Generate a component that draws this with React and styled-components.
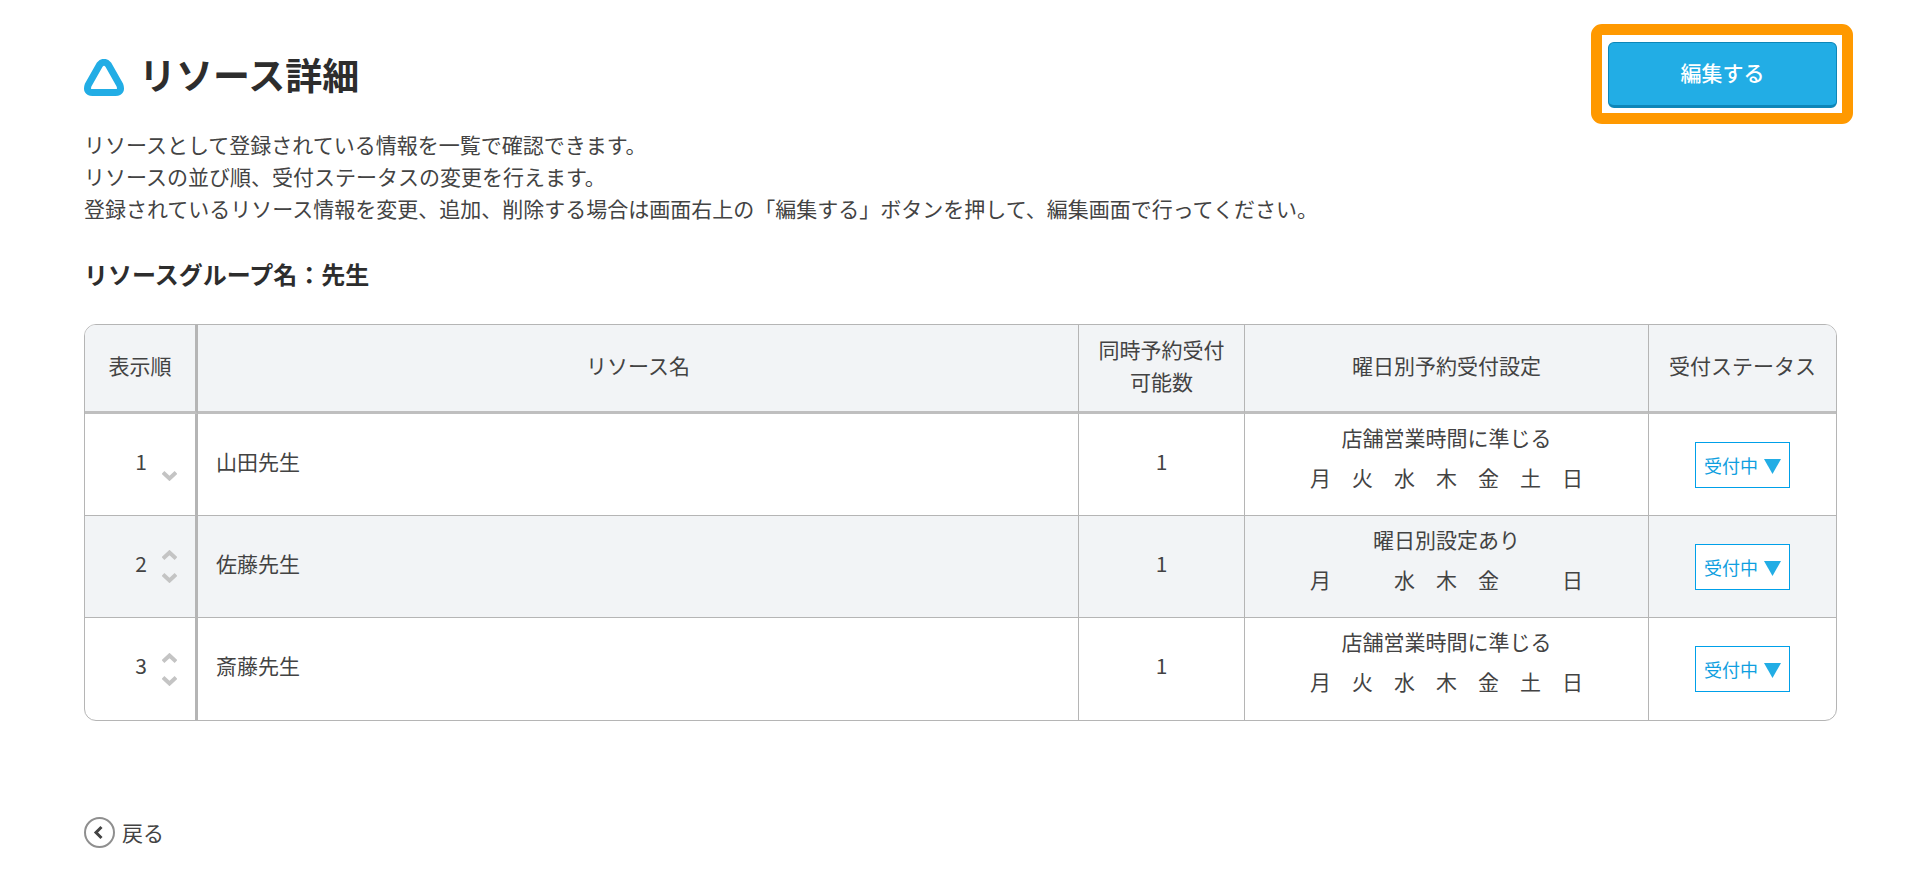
import React, { useState } from "react";
import styled, { createGlobalStyle } from "styled-components";


const RESOURCES = [
  { id: 1, name: "山田先生", capacity: 1, schedule: "店舗営業時間に準じる", days: "月火水木金土日" },
  { id: 2, name: "佐藤先生", capacity: 1, schedule: "曜日別設定あり", days: "月水木金日" },
  { id: 3, name: "斎藤先生", capacity: 1, schedule: "店舗営業時間に準じる", days: "月火水木金土日" },
]

const WEEK = Array.from( "月火水木金土日" )


export default function App() {
  const [ resources, setResources ] = useState( RESOURCES )

  const move = ( index, step ) => {
    const next = [ ...resources ]
    const [ item ] = next.splice( index, 1 )
    next.splice( index + step, 0, item )
    setResources( next )
  }

  return (
    <Page>
      <GlobalStyle />
      <Header>
        <Title>
          <TitleIcon viewBox="0 0 40 37" aria-hidden="true">
            <path d="M15.8 5.6 Q20 1 24.2 5.6 L35.8 26 Q38.4 33.4 31.5 33.5 H8.5 Q1.6 33.4 4.2 26 Z" />
          </TitleIcon>
          リソース詳細
        </Title>
        <Highlight>
          <EditButton type="button">編集する</EditButton>
        </Highlight>
      </Header>

      <Lead>
        リソースとして登録されている情報を一覧で確認できます。<br />
        リソースの並び順、受付ステータスの変更を行えます。<br />
        登録されているリソース情報を変更、追加、削除する場合は画面右上の「編集する」ボタンを押して、編集画面で行ってください。
      </Lead>

      <GroupName>リソースグループ名：先生</GroupName>

      <Table>
        <colgroup>
          <Col $width="113px" />
          <Col />
          <Col $width="166px" />
          <Col $width="404px" />
          <Col $width="187px" />
        </colgroup>
        <thead>
          <tr>
            <HeadCell scope="col" $thick>表示順</HeadCell>
            <HeadCell scope="col">リソース名</HeadCell>
            <HeadCell scope="col">同時予約受付<br />可能数</HeadCell>
            <HeadCell scope="col">曜日別予約受付設定</HeadCell>
            <HeadCell scope="col">受付ステータス</HeadCell>
          </tr>
        </thead>
        <tbody>
          {resources.map( ( item, index ) => (
            <Row key={item.id}>
              <Cell $thick>
                <Order>
                  <OrderNumber>{index + 1}</OrderNumber>
                  <Arrows>
                    {index > 0 && (
                      <ArrowButton type="button" aria-label="上へ移動" onClick={() => move( index, -1 )}>
                        <Chevron up />
                      </ArrowButton>
                    )}
                    <ArrowButton
                      type="button"
                      aria-label="下へ移動"
                      disabled={index === resources.length - 1}
                      onClick={() => move( index, 1 )}
                    >
                      <Chevron />
                    </ArrowButton>
                  </Arrows>
                </Order>
              </Cell>
              <Cell $left $text>{item.name}</Cell>
              <Cell $text>{item.capacity}</Cell>
              <Cell $text>
                <Schedule>{item.schedule}</Schedule>
                <Days>
                  {WEEK.map( ( day ) => (
                    <Day key={day}>{item.days.includes( day ) ? day : ""}</Day>
                  ) )}
                </Days>
              </Cell>
              <Cell>
                <StatusBox>
                  <StatusSelect aria-label={`${item.name}の受付ステータス`} defaultValue="open">
                    <option value="open">受付中</option>
                    <option value="closed">停止中</option>
                  </StatusSelect>
                  <Triangle viewBox="0 0 17 15" aria-hidden="true">
                    <path d="M0 0 H17 L8.5 15 Z" />
                  </Triangle>
                </StatusBox>
              </Cell>
            </Row>
          ) )}
        </tbody>
      </Table>

      <BackLink href="#">
        <BackIcon viewBox="0 0 31 31" aria-hidden="true">
          <circle cx="15.5" cy="15.5" r="14.5" />
          <path d="M17.5 10 L12 15.5 L17.5 21" />
        </BackIcon>
        戻る
      </BackLink>
    </Page>
  );
}


const Chevron = ( { up } ) => (
  <ChevronIcon viewBox="0 0 15 10" aria-hidden="true">
    <path d={up ? "M1 8.5 L7.5 2.5 L14 8.5" : "M1 1.5 L7.5 7.5 L14 1.5"} />
  </ChevronIcon>
)


const GlobalStyle = createGlobalStyle`
  * {
    box-sizing: border-box;
  }

  body {
    margin: 0;
    background: #fff;
    color: #434343;
    font-family: "Noto Sans CJK JP", sans-serif;
    font-size: 21px;
    line-height: 32px;
  }

  button, select {
    font-family: inherit;
  }
`;


const Page = styled.main`
  padding: 42px 83px 44px 84px;
`;


const Header = styled.header`
  display: flex;
  justify-content: space-between;
  align-items: flex-start;
`;


const Title = styled.h1`
  display: flex;
  align-items: flex-end;
  gap: 15px;
  margin: 0;
  padding-top: 6px;
  color: #2d2d2d;
  font-size: 37px;
  font-weight: 700;
  line-height: 52px;
`;


const TitleIcon = styled.svg`
  width: 40px;
  height: 37px;
  margin-bottom: 4px;

  path {
    fill: none;
    stroke: #22ade5;
    stroke-width: 7;
    stroke-linejoin: round;
  }
`;


const Highlight = styled.div`
  position: relative;

  &::after {
    content: "";
    position: absolute;
    inset: -18px -16px -16px -17px;
    border: 11px solid #ff9900;
    border-radius: 11px;
    pointer-events: none;
  }
`;


const EditButton = styled.button`
  display: block;
  width: 229px;
  height: 66px;
  padding: 0 0 4px;
  border: 1px solid #0d86b8;
  border-bottom-width: 3px;
  border-radius: 6px;
  background: #22ade5;
  color: #fff;
  font-size: 21px;
  font-weight: 500;
  cursor: pointer;
`;


const Lead = styled.p`
  margin: 20px 0 0;
`;


const GroupName = styled.h2`
  margin: 32px 0;
  color: #2d2d2d;
  font-size: 24px;
  font-weight: 700;
  line-height: 36px;
`;


const Table = styled.table`
  width: 100%;
  table-layout: fixed;
  border: 1px solid #b5b5b5;
  border-radius: 12px;
  border-collapse: separate;
  border-spacing: 0;
  overflow: hidden;
`;


const Col = styled.col`
  width: ${( { $width } ) => $width || "auto"};
`;


const HeadCell = styled.th`
  height: 89px;
  padding: 0 0 6px;
  border-bottom: 3px solid #bfbfbf;
  border-right: ${( { $thick } ) => $thick ? "3px" : "1px"} solid #b5b5b5;
  background: #f2f4f6;
  font-weight: 400;

  &:last-child {
    border-right: 0;
  }
`;


const Cell = styled.td`
  height: 102px;
  padding: 0 ${( { $left } ) => $left ? "18px" : "0"} ${( { $text } ) => $text ? "8px" : "0"};
  border-bottom: 1px solid #b5b5b5;
  border-right: ${( { $thick } ) => $thick ? "3px" : "1px"} solid #b5b5b5;
  text-align: ${( { $left } ) => $left ? "left" : "center"};

  &:last-child {
    border-right: 0;
  }
`;


const Row = styled.tr`
  &:nth-child(even) {
    background: #f2f4f6;
  }

  &:last-child td {
    border-bottom: 0;
  }
`;


const Order = styled.div`
  display: flex;
  justify-content: flex-end;
  align-items: center;
  gap: 15px;
  padding-right: 18px;
`;


const OrderNumber = styled.span`
  padding-bottom: 8px;
`;


const Arrows = styled.div`
  display: flex;
  flex-direction: column;
  justify-content: flex-end;
  gap: 13px;
  height: 33px;
`;


const ArrowButton = styled.button`
  display: block;
  padding: 0;
  border: 0;
  background: none;
  cursor: pointer;
`;


const ChevronIcon = styled.svg`
  display: block;
  width: 15px;
  height: 10px;

  path {
    fill: none;
    stroke: #c4c4c4;
    stroke-width: 4;
  }
`;


const Schedule = styled.div`
  margin-bottom: 8px;
`;


const Days = styled.div`
  display: flex;
  justify-content: center;
  gap: 21px;
  padding-bottom: 8px;
`;


const Day = styled.span`
  width: 21px;
  height: 32px;
`;


const StatusBox = styled.div`
  position: relative;
  width: 95px;
  margin: 0 auto;
`;


const StatusSelect = styled.select`
  appearance: none;
  display: block;
  width: 100%;
  height: 46px;
  padding: 0 0 0 8px;
  border: 1px solid #00a0e9;
  border-radius: 0;
  background: #fff;
  color: #0f9fe0;
  font-size: 18px;
  cursor: pointer;
`;


const Triangle = styled.svg`
  position: absolute;
  top: 17px;
  right: 9px;
  width: 17px;
  height: 15px;
  fill: #22ade5;
  pointer-events: none;
`;


const BackLink = styled.a`
  display: inline-flex;
  align-items: center;
  gap: 7px;
  margin-top: 95px;
  color: inherit;
  text-decoration: none;
`;


const BackIcon = styled.svg`
  width: 31px;
  height: 31px;
  fill: none;
  stroke: #8f8f8f;
  stroke-width: 2;

  path {
    stroke: #434343;
    stroke-width: 3;
  }
`;
